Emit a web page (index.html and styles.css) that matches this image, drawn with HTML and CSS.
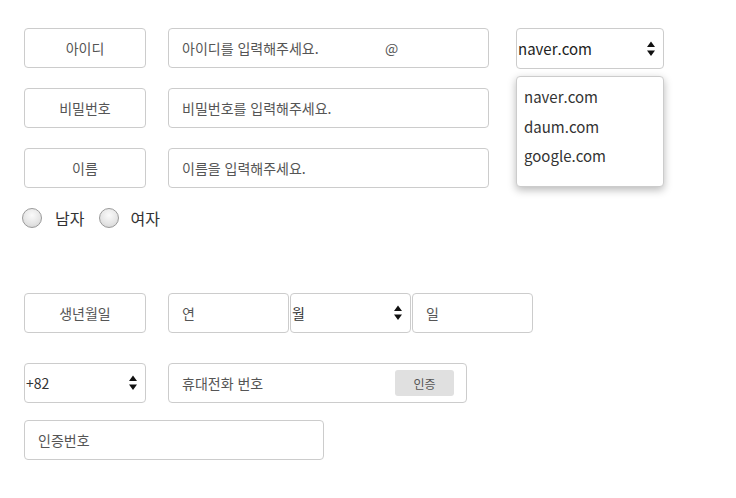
FILE: index.html
```html
<!DOCTYPE html>
<html lang="ko">
<head>
<meta charset="utf-8">
<link rel="stylesheet" href="styles.css">
</head>
<body>
<div class="form">
  <div class="row r1">
    <div class="label">아이디</div>
    <div class="field wide id-field"><span class="ph ph-id">아이디를 입력해주세요.</span><span class="at">@</span></div>
    <div class="domain">
      <div class="select sel-domain"><span>naver.com</span><svg class="arrows" width="8" height="16" viewBox="0 0 8 16"><path d="M4 0.5 L8 6 L0 6 Z M0 9.5 L8 9.5 L4 15 Z" fill="#111"/></svg></div>
      <div class="menu">
        <div class="opt">naver.com</div>
        <div class="opt">daum.com</div>
        <div class="opt">google.com</div>
      </div>
    </div>
  </div>
  <div class="row r2">
    <div class="label">비밀번호</div>
    <div class="field wide"><span class="ph">비밀번호를 입력해주세요.</span></div>
  </div>
  <div class="row r3">
    <div class="label">이름</div>
    <div class="field wide"><span class="ph">이름을 입력해주세요.</span></div>
  </div>
  <div class="gender">
    <span class="radio"></span><span class="rtext">남자</span>
    <span class="radio r-second"></span><span class="rtext">여자</span>
  </div>
  <div class="row r4">
    <div class="label">생년월일</div>
    <div class="birth">
      <div class="field small"><span class="ph">연</span></div>
      <div class="select month"><span>월</span><svg class="arrows" width="8" height="16" viewBox="0 0 8 16"><path d="M4 0.5 L8 6 L0 6 Z M0 9.5 L8 9.5 L4 15 Z" fill="#111"/></svg></div>
      <div class="field small"><span class="ph">일</span></div>
    </div>
  </div>
  <div class="row r5">
    <div class="select code"><span>+82</span><svg class="arrows" width="8" height="16" viewBox="0 0 8 16"><path d="M4 0.5 L8 6 L0 6 Z M0 9.5 L8 9.5 L4 15 Z" fill="#111"/></svg></div>
    <div class="field phone"><span class="ph">휴대전화 번호</span><span class="btn">인증</span></div>
  </div>
  <div class="row r6">
    <div class="field cert"><span class="ph">인증번호</span></div>
  </div>
</div>
</body>
</html>
```

FILE: styles.css
```css
* { box-sizing: border-box; }
html, body { margin: 0; padding: 0; background: #fff; }
body {
  font-family: "Noto Sans CJK KR", "Noto Sans", sans-serif;
  font-size: 14px;
  color: #555;
}
.form {
  padding: 28px 0 0 24px;
  display: flex;
  flex-direction: column;
}
.row {
  display: flex;
  align-items: flex-start;
  gap: 22px;
}
.r2 { margin-top: 19px; }
.r3 { margin-top: 20px; }
.label {
  width: 122px;
  height: 40px;
  border: 1px solid #ccc;
  border-radius: 4px;
  display: flex;
  align-items: center;
  justify-content: center;
}
.field {
  height: 40px;
  border: 1px solid #ccc;
  border-radius: 4px;
  display: flex;
  align-items: center;
  padding-left: 13px;
}
.wide { width: 321px; }
.ph-id { width: 203px; }
.at { font-size: 14px; }
.domain {
  position: relative;
  margin-left: 5px;
}
.select {
  height: 41px;
  border: 1px solid #ccc;
  border-radius: 4px;
  display: flex;
  align-items: center;
  justify-content: space-between;
  padding: 0 4px 0 1px;
  color: #222;
  font-size: 15px;
  background: #fff;
}
.arrows { margin-right: 4px; }
.sel-domain { width: 148px; }
.menu {
  position: absolute;
  left: 0;
  top: 48px;
  width: 148px;
  height: 111px;
  background: #fff;
  border: 1px solid #ccc;
  border-radius: 4px;
  box-shadow: 0 3px 8px rgba(0,0,0,0.28);
  padding: 5px 0 0 7px;
  font-size: 15px;
  color: #333;
}
.opt { height: 29.5px; line-height: 29.5px; }
.gender {
  display: flex;
  align-items: center;
  margin: 18px 0 0 -2px;
}
.radio {
  width: 20px;
  height: 20px;
  border-radius: 50%;
  border: 1.5px solid #9a9a9a;
  background: radial-gradient(circle at 50% 35%, #fafafa 0%, #e6e6e6 55%, #cfcfcf 100%);
}
.rtext {
  margin-left: 13px;
  font-size: 16px;
  color: #333;
}
.r-second { margin-left: 15px; }
.r-second + .rtext { margin-left: 11px; }
.r4 { margin-top: 63px; }
.birth { display: flex; gap: 1px; }
.small { width: 121px; }
.month { width: 121px; height: 40px; color: #333; font-size: 14px; }
.r5 { margin-top: 30px; }
.code { width: 122px; height: 40px; font-size: 14px; color: #333; }
.phone {
  width: 299px;
  justify-content: space-between;
  padding-right: 12px;
}
.btn {
  width: 59px;
  height: 26px;
  background: #e0e0e0;
  border-radius: 3px;
  display: flex;
  align-items: center;
  justify-content: center;
  font-size: 12px;
}
.r6 { margin-top: 17px; }
.cert { width: 300px; }
```
